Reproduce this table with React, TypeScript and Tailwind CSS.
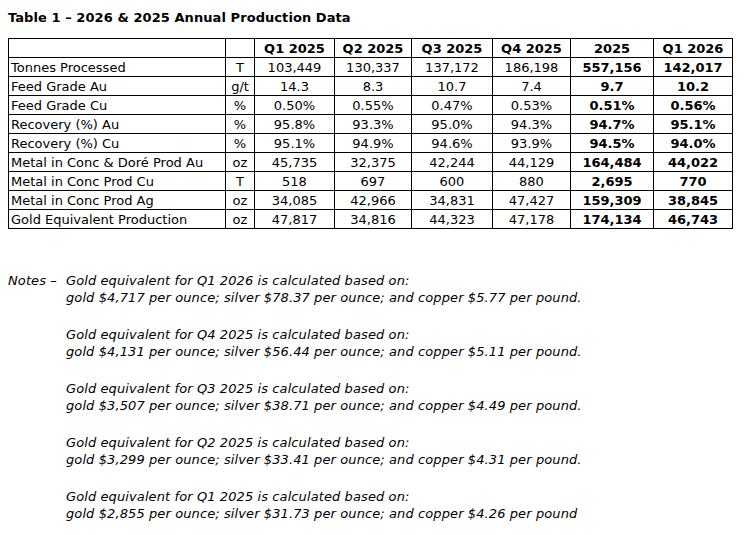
const HEADERS = ["Q1 2025", "Q2 2025", "Q3 2025", "Q4 2025", "2025", "Q1 2026"];

const ROWS: { label: string; unit: string; values: string[] }[] = [
  { label: "Tonnes Processed", unit: "T", values: ["103,449", "130,337", "137,172", "186,198", "557,156", "142,017"] },
  { label: "Feed Grade Au", unit: "g/t", values: ["14.3", "8.3", "10.7", "7.4", "9.7", "10.2"] },
  { label: "Feed Grade Cu", unit: "%", values: ["0.50%", "0.55%", "0.47%", "0.53%", "0.51%", "0.56%"] },
  { label: "Recovery (%) Au", unit: "%", values: ["95.8%", "93.3%", "95.0%", "94.3%", "94.7%", "95.1%"] },
  { label: "Recovery (%) Cu", unit: "%", values: ["95.1%", "94.9%", "94.6%", "93.9%", "94.5%", "94.0%"] },
  { label: "Metal in Conc & Doré Prod Au", unit: "oz", values: ["45,735", "32,375", "42,244", "44,129", "164,484", "44,022"] },
  { label: "Metal in Conc Prod Cu", unit: "T", values: ["518", "697", "600", "880", "2,695", "770"] },
  { label: "Metal in Conc Prod Ag", unit: "oz", values: ["34,085", "42,966", "34,831", "47,427", "159,309", "38,845"] },
  { label: "Gold Equivalent Production", unit: "oz", values: ["47,817", "34,816", "44,323", "47,178", "174,134", "46,743"] },
];

const NOTES = [
  ["Q1 2026", "gold $4,717 per ounce; silver $78.37 per ounce; and copper $5.77 per pound."],
  ["Q4 2025", "gold $4,131 per ounce; silver $56.44 per ounce; and copper $5.11 per pound."],
  ["Q3 2025", "gold $3,507 per ounce; silver $38.71 per ounce; and copper $4.49 per pound."],
  ["Q2 2025", "gold $3,299 per ounce; silver $33.41 per ounce; and copper $4.31 per pound."],
  ["Q1 2025", "gold $2,855 per ounce; silver $31.73 per ounce; and copper $4.26 per pound"],
];

const cell = "border border-black h-[19px] px-[2px] py-0 leading-[17px]";

export default function App() {
  return (
    <div className="min-h-[535px] w-[748px] bg-white pl-[8px] pt-[9px] text-[13px] text-black [font-family:'DejaVu_Sans',Verdana,sans-serif]">
      <h1 className="text-[13px] font-bold leading-[17px] tracking-[0.07px]">
        Table 1 – 2026 &amp; 2025 Annual Production Data
      </h1>

      <table className="mt-[12px] w-[724px] table-fixed border-collapse">
        <colgroup>
          <col className="w-[217px]" />
          <col className="w-[29px]" />
          <col className="w-[80px]" />
          <col className="w-[77px]" />
          <col className="w-[81px]" />
          <col className="w-[78px]" />
          <col className="w-[83px]" />
          <col className="w-[79px]" />
        </colgroup>
        <thead>
          <tr>
            <th className={cell} />
            <th className={cell} />
            {HEADERS.map((h) => (
              <th key={h} className={`${cell} text-center font-bold`}>
                {h}
              </th>
            ))}
          </tr>
        </thead>
        <tbody>
          {ROWS.map((r) => (
            <tr key={r.label}>
              <td className={`${cell} text-left whitespace-nowrap`}>{r.label}</td>
              <td className={`${cell} text-center`}>{r.unit}</td>
              {r.values.map((v, i) => (
                <td
                  key={i}
                  className={`${cell} text-center ${i >= 4 ? "font-bold" : ""}`}
                >
                  {v}
                </td>
              ))}
            </tr>
          ))}
        </tbody>
      </table>

      <div className="mt-[43px] flex italic leading-[17px] tracking-[0.1px]">
        <div className="w-[58px] shrink-0">Notes –</div>
        <div className="flex flex-col gap-[20px]">
          {NOTES.map(([q, line]) => (
            <p key={q}>
              Gold equivalent for {q} is calculated based on:
              <br />
              {line}
            </p>
          ))}
        </div>
      </div>
    </div>
  );
}
